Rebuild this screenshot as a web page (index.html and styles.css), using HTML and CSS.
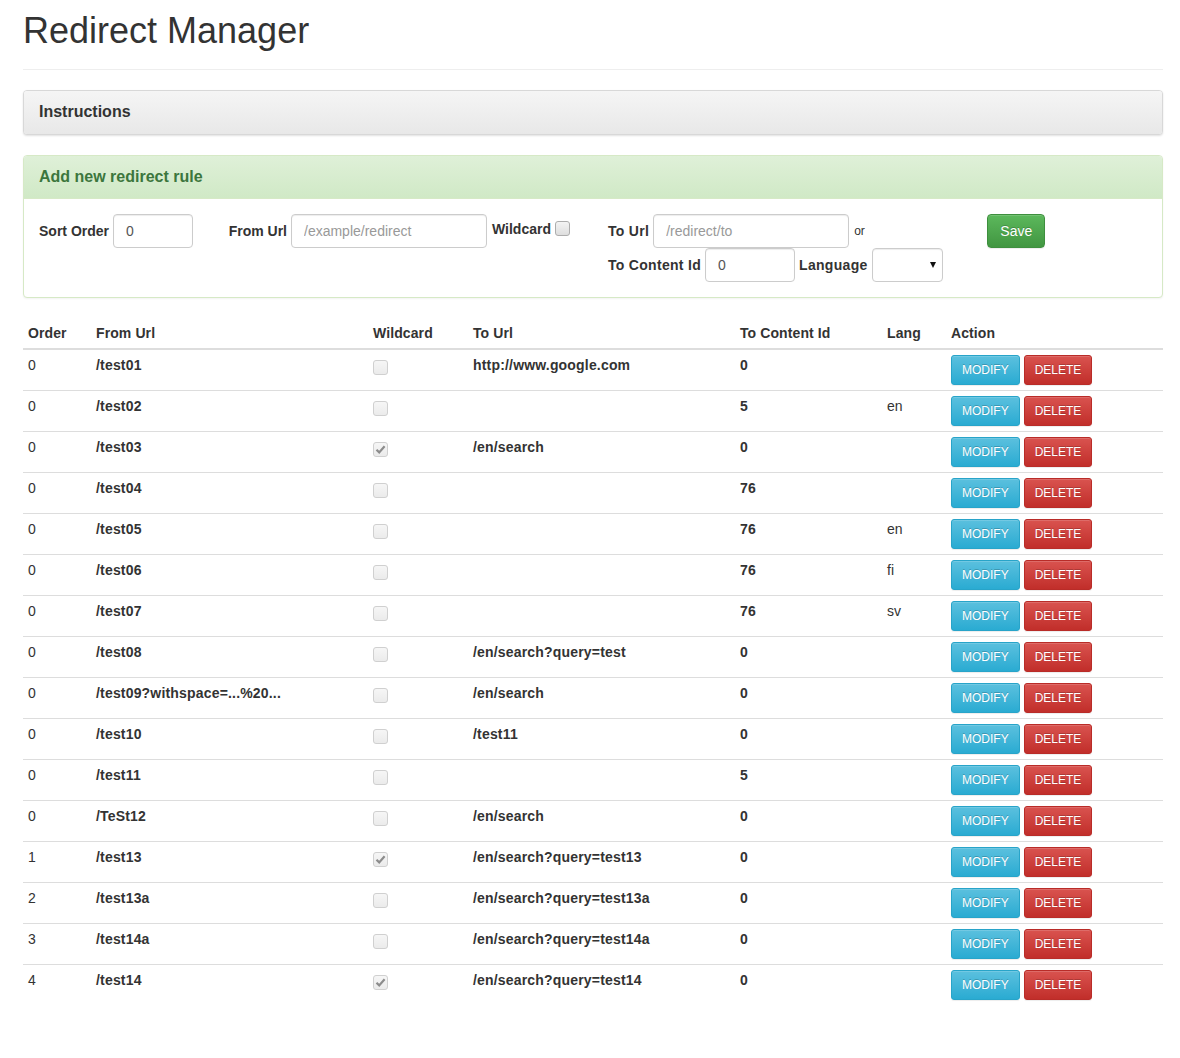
FILE: index.html
```html
<!DOCTYPE html>
<html lang="en">
<head>
<meta charset="utf-8">
<title>Redirect Manager</title>
<link rel="stylesheet" href="styles.css">
</head>
<body>
<div class="container">
  <div class="page-header"><h1>Redirect Manager</h1></div>

  <div class="panel panel-default">
    <div class="panel-heading"><h4 class="panel-title">Instructions</h4></div>
  </div>

  <div class="panel panel-success">
    <div class="panel-heading"><h4 class="panel-title">Add new redirect rule</h4></div>
    <div class="panel-body">
      <div class="form-row">
        <div class="col col-2">
          <div class="line">
            <label>Sort Order</label>
            <input class="form-control w80" type="text" value="0">
          </div>
        </div>
        <div class="col col-4">
          <div class="line">
            <label>From Url</label>
            <input class="form-control w196" type="text" placeholder="/example/redirect">
            <label class="wild">Wildcard</label>
            <span class="cb cb-form"></span>
          </div>
        </div>
        <div class="col col-4">
          <div class="line">
            <label class="ls">To Url</label>
            <input class="form-control w196" type="text" placeholder="/redirect/to">
            <small class="or">or</small>
          </div>
          <div class="line">
            <label class="ls">To Content Id</label>
            <input class="form-control w90" type="text" value="0">
            <label class="ls">Language</label>
            <span class="select-wrap"><select class="form-control w71"><option></option><option>en</option><option>fi</option><option>sv</option></select></span>
          </div>
        </div>
        <div class="col col-2">
          <div class="line">
            <button class="btn btn-success" type="button">Save</button>
          </div>
        </div>
      </div>
    </div>
  </div>

  <table class="table">
    <colgroup>
      <col class="c-order"><col class="c-from"><col class="c-wild"><col class="c-to"><col class="c-cid"><col class="c-lang"><col class="c-act">
    </colgroup>
    <thead>
      <tr><th>Order</th><th>From Url</th><th>Wildcard</th><th>To Url</th><th>To Content Id</th><th>Lang</th><th>Action</th></tr>
    </thead>
    <tbody>
      <tr><td>0</td><td class="b">/test01</td><td><span class="cb"></span></td><td class="b">http://www.google.com</td><td class="b">0</td><td></td><td><div class="acts"><button class="btn btn-sm btn-info">MODIFY</button><button class="btn btn-sm btn-danger">DELETE</button></div></td></tr>
      <tr><td>0</td><td class="b">/test02</td><td><span class="cb"></span></td><td class="b"></td><td class="b">5</td><td>en</td><td><div class="acts"><button class="btn btn-sm btn-info">MODIFY</button><button class="btn btn-sm btn-danger">DELETE</button></div></td></tr>
      <tr><td>0</td><td class="b">/test03</td><td><span class="cb on"><svg viewBox="0 0 15 15" width="15" height="15"><path d="M3.5 7.8 L6.2 10.4 L11.6 4.2" fill="none" stroke="#8c8c8c" stroke-width="2.2"/></svg></span></td><td class="b">/en/search</td><td class="b">0</td><td></td><td><div class="acts"><button class="btn btn-sm btn-info">MODIFY</button><button class="btn btn-sm btn-danger">DELETE</button></div></td></tr>
      <tr><td>0</td><td class="b">/test04</td><td><span class="cb"></span></td><td class="b"></td><td class="b">76</td><td></td><td><div class="acts"><button class="btn btn-sm btn-info">MODIFY</button><button class="btn btn-sm btn-danger">DELETE</button></div></td></tr>
      <tr><td>0</td><td class="b">/test05</td><td><span class="cb"></span></td><td class="b"></td><td class="b">76</td><td>en</td><td><div class="acts"><button class="btn btn-sm btn-info">MODIFY</button><button class="btn btn-sm btn-danger">DELETE</button></div></td></tr>
      <tr><td>0</td><td class="b">/test06</td><td><span class="cb"></span></td><td class="b"></td><td class="b">76</td><td>fi</td><td><div class="acts"><button class="btn btn-sm btn-info">MODIFY</button><button class="btn btn-sm btn-danger">DELETE</button></div></td></tr>
      <tr><td>0</td><td class="b">/test07</td><td><span class="cb"></span></td><td class="b"></td><td class="b">76</td><td>sv</td><td><div class="acts"><button class="btn btn-sm btn-info">MODIFY</button><button class="btn btn-sm btn-danger">DELETE</button></div></td></tr>
      <tr><td>0</td><td class="b">/test08</td><td><span class="cb"></span></td><td class="b">/en/search?query=test</td><td class="b">0</td><td></td><td><div class="acts"><button class="btn btn-sm btn-info">MODIFY</button><button class="btn btn-sm btn-danger">DELETE</button></div></td></tr>
      <tr><td>0</td><td class="b">/test09?withspace=...%20...</td><td><span class="cb"></span></td><td class="b">/en/search</td><td class="b">0</td><td></td><td><div class="acts"><button class="btn btn-sm btn-info">MODIFY</button><button class="btn btn-sm btn-danger">DELETE</button></div></td></tr>
      <tr><td>0</td><td class="b">/test10</td><td><span class="cb"></span></td><td class="b">/test11</td><td class="b">0</td><td></td><td><div class="acts"><button class="btn btn-sm btn-info">MODIFY</button><button class="btn btn-sm btn-danger">DELETE</button></div></td></tr>
      <tr><td>0</td><td class="b">/test11</td><td><span class="cb"></span></td><td class="b"></td><td class="b">5</td><td></td><td><div class="acts"><button class="btn btn-sm btn-info">MODIFY</button><button class="btn btn-sm btn-danger">DELETE</button></div></td></tr>
      <tr><td>0</td><td class="b">/TeSt12</td><td><span class="cb"></span></td><td class="b">/en/search</td><td class="b">0</td><td></td><td><div class="acts"><button class="btn btn-sm btn-info">MODIFY</button><button class="btn btn-sm btn-danger">DELETE</button></div></td></tr>
      <tr><td>1</td><td class="b">/test13</td><td><span class="cb on"><svg viewBox="0 0 15 15" width="15" height="15"><path d="M3.5 7.8 L6.2 10.4 L11.6 4.2" fill="none" stroke="#8c8c8c" stroke-width="2.2"/></svg></span></td><td class="b">/en/search?query=test13</td><td class="b">0</td><td></td><td><div class="acts"><button class="btn btn-sm btn-info">MODIFY</button><button class="btn btn-sm btn-danger">DELETE</button></div></td></tr>
      <tr><td>2</td><td class="b">/test13a</td><td><span class="cb"></span></td><td class="b">/en/search?query=test13a</td><td class="b">0</td><td></td><td><div class="acts"><button class="btn btn-sm btn-info">MODIFY</button><button class="btn btn-sm btn-danger">DELETE</button></div></td></tr>
      <tr><td>3</td><td class="b">/test14a</td><td><span class="cb"></span></td><td class="b">/en/search?query=test14a</td><td class="b">0</td><td></td><td><div class="acts"><button class="btn btn-sm btn-info">MODIFY</button><button class="btn btn-sm btn-danger">DELETE</button></div></td></tr>
      <tr><td>4</td><td class="b">/test14</td><td><span class="cb on"><svg viewBox="0 0 15 15" width="15" height="15"><path d="M3.5 7.8 L6.2 10.4 L11.6 4.2" fill="none" stroke="#8c8c8c" stroke-width="2.2"/></svg></span></td><td class="b">/en/search?query=test14</td><td class="b">0</td><td></td><td><div class="acts"><button class="btn btn-sm btn-info">MODIFY</button><button class="btn btn-sm btn-danger">DELETE</button></div></td></tr>
    </tbody>
  </table>
</div>
</body>
</html>
```
FILE: styles.css
```css
* { box-sizing: border-box; }
html, body { margin: 0; padding: 0; background: #fff; }
body {
  font-family: "Liberation Sans", Arial, Helvetica, sans-serif;
  font-size: 14px;
  line-height: 20px;
  color: #333;
}
.container { width: 1140px; margin: 0 0 0 23px; padding-bottom: 40px; }

.page-header { border-bottom: 1px solid #eee; padding-top: 11px; padding-bottom: 18px; margin-bottom: 20px; }
.page-header h1 { margin: 0; font-size: 36px; font-weight: 500; line-height: 39.6px; }

.panel { border: 1px solid #ddd; border-radius: 4px; margin-bottom: 20px; background: #fff; box-shadow: 0 1px 2px rgba(0,0,0,.05); }
.panel-heading { padding: 10px 15px; border-radius: 3px 3px 0 0; }
.panel-title { margin: 0; font-size: 16px; font-weight: bold; line-height: 22px; }
.panel-default { border-color: #d8d8d8; box-shadow: 0 1px 2px rgba(0,0,0,.12); }
.panel-default > .panel-heading { background: linear-gradient(to bottom, #f5f5f5 0, #e8e8e8 100%); color: #333; border-radius: 3px; padding-bottom: 11px; }
.panel-success { border-color: #d6e9c6; }
.panel-success > .panel-heading { background: linear-gradient(to bottom, #dff0d8 0, #d0e9c6 100%); color: #3c763d; border-bottom: 1px solid #d6e9c6; }
.panel-body { padding: 15px; }

.form-row { display: flex; margin: 0 -15px; }
.col { padding: 0 15px; }
.col-2 { width: 16.6667%; }
.col-4 { width: 33.3333%; }
.line { display: flex; align-items: center; gap: 4px; height: 34px; }
label { font-weight: bold; white-space: nowrap; }
label.ls { letter-spacing: 0.3px; }
label.wild { margin-left: 1px; margin-right: 1px; position: relative; top: -2px; }
.form-control {
  height: 34px; padding: 6px 12px; font-family: inherit; font-size: 14px; line-height: 20px; color: #555;
  background: #fff; border: 1px solid #ccc; border-radius: 4px;
  box-shadow: inset 0 1px 1px rgba(0,0,0,.075);
}
.form-control::placeholder { color: #999; }
.w80 { width: 80px; }
.w196 { width: 196px; }
.w90 { width: 90px; }
.w71 { width: 71px; }
.or { font-size: 12px; color: #333; margin-left: 1px; }
.select-wrap { position: relative; display: inline-block; height: 34px; }
.select-wrap select { appearance: none; -webkit-appearance: none; }
.select-wrap::after {
  content: ""; position: absolute; right: 7px; top: 14px;
  border-left: 3.5px solid transparent; border-right: 3.5px solid transparent; border-top: 6px solid #111;
}

.cb { display: block; width: 15px; height: 15px; margin-top: 5px; border: 1px solid #d0d0d0; border-radius: 3px; background: linear-gradient(to bottom, #f6f6f6, #ebebeb); }
.cb svg { display: block; margin: -1px 0 0 -1px; }
.cb-form { width: 15px; height: 15px; margin-top: 0; position: relative; top: -2px; left: -1px; border-color: #adadad; background: linear-gradient(to bottom, #f4f4f4, #dedede); }

.btn {
  display: inline-block; font-family: inherit; font-weight: normal; color: #fff; cursor: pointer;
  border: 1px solid transparent; text-shadow: 0 -1px 0 rgba(0,0,0,.2);
  box-shadow: inset 0 1px 0 rgba(255,255,255,.15), 0 1px 1px rgba(0,0,0,.075);
  padding: 6px 12px; font-size: 14px; line-height: 20px; border-radius: 4px; height: 34px;
}
.btn-sm { padding: 5px 10px; font-size: 12px; line-height: 18px; border-radius: 3px; height: 30px; }
.btn-success { background: linear-gradient(to bottom, #5cb85c 0, #419641 100%); border-color: #3e8f3e; }
.btn-info { background: linear-gradient(to bottom, #5bc0de 0, #2aabd2 100%); border-color: #28a4c9; }
.btn-danger { background: linear-gradient(to bottom, #d9534f 0, #c12e2a 100%); border-color: #b92c28; }
.acts { display: flex; gap: 4px; }

.table { width: 100%; table-layout: fixed; border-collapse: collapse; border-spacing: 0; }
.c-order { width: 68px; }
.c-from { width: 277px; }
.c-wild { width: 100px; }
.c-to { width: 267px; }
.c-cid { width: 147px; }
.c-lang { width: 64px; }
.c-act { width: 217px; }
.table th { text-align: left; font-weight: bold; padding: 5px; vertical-align: bottom; border-bottom: 2px solid #ddd; white-space: nowrap; letter-spacing: 0.1px; }
.table td { padding: 5px; vertical-align: top; border-top: 1px solid #ddd; white-space: nowrap; overflow: hidden; }
.table tbody tr:first-child td { border-top: 0; }
.table td.b { font-weight: bold; letter-spacing: 0.18px; }
```
